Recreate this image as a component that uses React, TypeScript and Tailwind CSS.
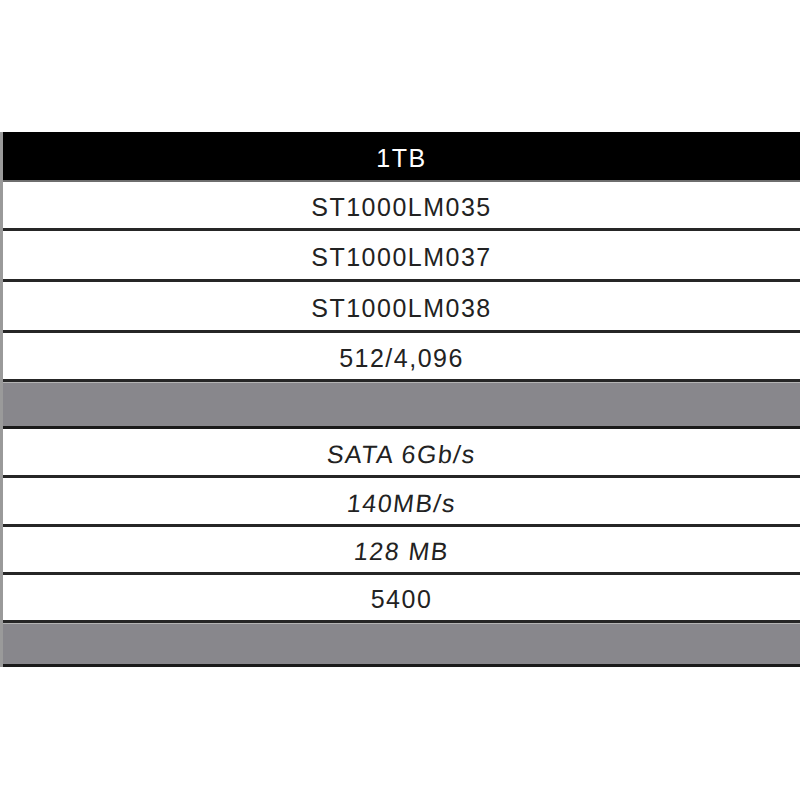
type Row = {
  label: string;
  kind: 'head' | 'cell' | 'gap';
  h: string;
  italic?: boolean;
};

// Spec table for the 1TB drive family (heights include the bottom rule)
const ROWS: Row[] = [
  { label: '1TB', kind: 'head', h: 'h-[50px]' },
  { label: 'ST1000LM035', kind: 'cell', h: 'h-[49px]' },
  { label: 'ST1000LM037', kind: 'cell', h: 'h-[51px]' },
  { label: 'ST1000LM038', kind: 'cell', h: 'h-[51px]' },
  { label: '512/4,096', kind: 'cell', h: 'h-[49px]' },
  { label: '', kind: 'gap', h: 'h-[47px]' },
  { label: 'SATA 6Gb/s', kind: 'cell', h: 'h-[49px]', italic: true },
  { label: '140MB/s', kind: 'cell', h: 'h-[49px]', italic: true },
  { label: '128 MB', kind: 'cell', h: 'h-[48px]', italic: true },
  { label: '5400', kind: 'cell', h: 'h-[48px]' },
  { label: '', kind: 'gap', h: 'h-[44px]' },
];

function TableRow({ row }: { row: Row }) {
  const base = 'flex items-center justify-center pt-[5px]';
  if (row.kind === 'head') {
    return (
      <div className={`${base} ${row.h} bg-black text-white border-b-2 border-[#6e6e6e]`}>
        <span className="text-[25px] tracking-[1.5px]">{row.label}</span>
      </div>
    );
  }
  if (row.kind === 'gap') {
    return <div className={`${row.h} bg-[#88878c] border-t border-[#b4b4b4] border-b-[3px] border-b-[#1a1a1a]`} />;
  }
  return (
    <div className={`${base} ${row.h} bg-white text-[#222] border-b-[3px] border-[#262626]`}>
      <span className={`inline-block text-[25px] tracking-[1.5px] ${row.italic ? '-skew-x-6' : ''}`}>
        {row.label}
      </span>
    </div>
  );
}

export default function App() {
  return (
    <div
      className="w-[800px] h-[800px] bg-white pt-[132px]"
      style={{ fontFamily: '"Liberation Sans", Arial, sans-serif' }}
    >
      <div className="border-l-[3px] border-[#9a9a9a]">
        {ROWS.map((row, i) => (
          <TableRow key={i} row={row} />
        ))}
      </div>
    </div>
  );
}
